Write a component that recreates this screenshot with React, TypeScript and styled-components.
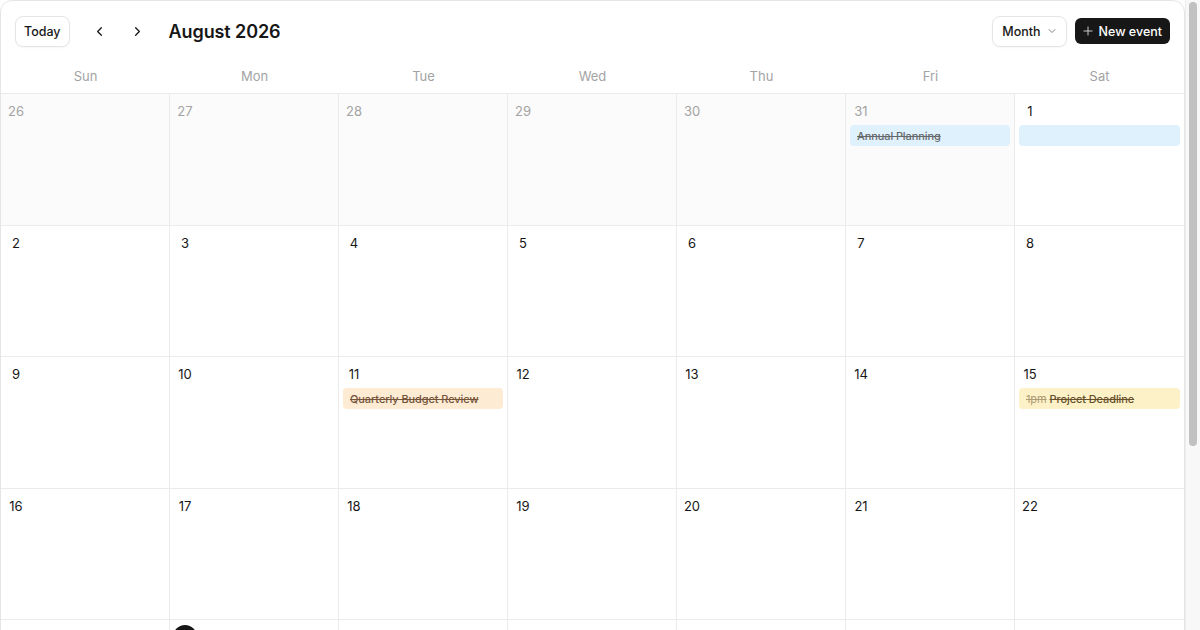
import React from "react";
import styled, { createGlobalStyle } from "styled-components";
import { ChevronLeft, ChevronRight, ChevronDown, Plus } from "lucide-react";

const Global = createGlobalStyle`
  html, body { margin: 0; padding: 0; background: #ffffff; overflow: hidden; }
  body { font-family: Inter, "Noto Sans", "Liberation Sans", sans-serif; color: #171717; -webkit-font-smoothing: antialiased; }
  * { box-sizing: border-box; }
`;

const Page = styled.div`
  height: 100vh;
  overflow: hidden;
  padding-right: 15px;
`;

const ScrollTrack = styled.div`
  position: fixed;
  top: 0;
  right: 0;
  width: 15px;
  height: 100vh;
  background: #f8f8f8;
  border-left: 1px solid #ededed;
`;

const ScrollThumb = styled.div`
  position: absolute;
  top: 2px;
  left: 3px;
  width: 8px;
  border-radius: 4px;
  background: #c1c1c1;
`;

const Inner = styled.div`
  padding-bottom: 10px;
`;

const Card = styled.div`
  border: 1px solid #e5e5e5;
  border-radius: 12px;
  overflow: hidden;
  background: #fff;
`;

const Header = styled.header`
  height: 60px;
  display: flex;
  align-items: center;
  justify-content: space-between;
  padding: 0 14px 0 14px;
`;

const Group = styled.div<{ $gap: number }>`
  display: flex;
  align-items: center;
  gap: ${(p) => p.$gap}px;
`;

const OutlineButton = styled.button<{ $pl: number; $pr: number }>`
  height: 31px;
  display: inline-flex;
  align-items: center;
  gap: 5px;
  padding: 0 ${(p) => p.$pr}px 0 ${(p) => p.$pl}px;
  border: 1px solid #e5e5e5;
  border-radius: 8px;
  background: #fff;
  box-shadow: 0 1px 2px rgba(0, 0, 0, 0.04);
  font-family: inherit;
  font-size: 12.5px;
  font-weight: 500;
  color: #171717;
  cursor: pointer;
  svg { color: #737373; }
`;

const IconButton = styled.button`
  width: 32px;
  height: 32px;
  display: inline-flex;
  align-items: center;
  justify-content: center;
  border: none;
  background: transparent;
  border-radius: 8px;
  color: #171717;
  padding: 0;
  cursor: pointer;
`;

const Title = styled.h1`
  margin: 0 0 0 1px;
  font-size: 18px;
  font-weight: 600;
  letter-spacing: -0.1px;
  color: #171717;
`;

const PrimaryButton = styled.button`
  height: 26px;
  display: inline-flex;
  align-items: center;
  gap: 4px;
  padding: 0 8px 0 6px;
  border: none;
  border-radius: 6px;
  background: #171717;
  color: #fff;
  font-family: inherit;
  font-size: 12.5px;
  font-weight: 500;
  cursor: pointer;
  svg { color: #d4d4d4; }
`;

const WeekHeader = styled.div`
  display: grid;
  grid-template-columns: repeat(7, 1fr);
  height: 33px;
  border-bottom: 1px solid #ebebeb;
`;

const WeekDay = styled.div`
  display: flex;
  align-items: center;
  justify-content: center;
  font-size: 13px;
  color: #a3a3a3;
  padding-bottom: 2px;
`;

const Grid = styled.div`
  display: grid;
  grid-template-columns: repeat(7, 1fr);
  grid-auto-rows: 131.5px;
`;

const Cell = styled.div<{ $muted: boolean; $last: boolean }>`
  background: ${(p) => (p.$muted ? "#fbfbfb" : "#ffffff")};
  border-right: ${(p) => (p.$last ? "none" : "1px solid #ebebeb")};
  border-bottom: 1px solid #ebebeb;
  padding: 5px 0 0 0;
  display: flex;
  flex-direction: column;
  gap: 2px;
  min-width: 0;
`;

const DayNum = styled.span<{ $muted: boolean; $today: boolean }>`
  width: 24px;
  height: 24px;
  margin-left: 3px;
  display: flex;
  align-items: center;
  justify-content: center;
  border-radius: 50%;
  font-size: 13px;
  color: ${(p) => (p.$today ? "#fff" : p.$muted ? "#a3a3a3" : "#171717")};
  background: ${(p) => (p.$today ? "#171717" : "transparent")};
  font-weight: ${(p) => (p.$today ? 600 : 400)};
`;

const tones = {
  blue: { bg: "#dff1fd", fg: "#525252" },
  orange: { bg: "#fdebd3", fg: "#5c3a1e" },
  yellow: { bg: "#fdf1c7", fg: "#4a3410" },
};

type Tone = keyof typeof tones;

const Chip = styled.div<{ $tone: Tone }>`
  height: 21px;
  margin: 0 4px;
  padding: 0 7px;
  border-radius: 4px;
  background: ${(p) => tones[p.$tone].bg};
  color: ${(p) => tones[p.$tone].fg};
  font-size: 11px;
  font-weight: 500;
  letter-spacing: -0.1px;
  display: flex;
  align-items: center;
  gap: 3px;
  white-space: nowrap;
  overflow: hidden;
  text-decoration: line-through;
`;

const ChipTime = styled.span`
  opacity: 0.45;
  font-weight: 400;
`;

const ChipText = styled.span`
  opacity: 0.85;
`;

type Ev = { title?: string; time?: string; tone: Tone };

const events: Record<string, Ev[]> = {
  "7-31": [{ title: "Annual Planning", tone: "blue" }],
  "8-1": [{ tone: "blue" }],
  "8-11": [{ title: "Quarterly Budget Review", tone: "orange" }],
  "8-15": [{ title: "Project Deadline", time: "1pm", tone: "yellow" }],
};

const weekdays = ["Sun", "Mon", "Tue", "Wed", "Thu", "Fri", "Sat"];

function buildDays() {
  const days: { d: number; m: number }[] = [];
  for (let d = 26; d <= 31; d++) days.push({ d, m: 7 });
  for (let d = 1; d <= 31; d++) days.push({ d, m: 8 });
  for (let d = 1; d <= 5; d++) days.push({ d, m: 9 });
  return days;
}

export default function App() {
  const days = buildDays();
  return (
    <Page>
      <Global />
      <Inner>
        <Card>
          <Header>
            <Group $gap={14}>
              <OutlineButton $pl={8} $pr={8}>Today</OutlineButton>
              <Group $gap={6}>
                <IconButton aria-label="Previous">
                  <ChevronLeft size={15} strokeWidth={2} />
                </IconButton>
                <IconButton aria-label="Next">
                  <ChevronRight size={15} strokeWidth={2} />
                </IconButton>
              </Group>
              <Title>August 2026</Title>
            </Group>
            <Group $gap={8}>
              <OutlineButton $pl={9} $pr={8}>
                Month
                <ChevronDown size={12} strokeWidth={1.8} />
              </OutlineButton>
              <PrimaryButton>
                <Plus size={14} strokeWidth={1.6} />
                New event
              </PrimaryButton>
            </Group>
          </Header>
          <WeekHeader>
            {weekdays.map((w) => (
              <WeekDay key={w}>{w}</WeekDay>
            ))}
          </WeekHeader>
          <Grid>
            {days.map((day, i) => {
              const muted = day.m !== 8;
              const today = day.m === 8 && day.d === 24;
              const evs = events[`${day.m}-${day.d}`] || [];
              return (
                <Cell key={i} $muted={muted} $last={i % 7 === 6}>
                  <DayNum $muted={muted} $today={today}>
                    {day.d}
                  </DayNum>
                  {evs.map((e, j) => (
                    <Chip key={j} $tone={e.tone}>
                      {e.time && <ChipTime>{e.time}</ChipTime>}
                      {e.title && <ChipText>{e.title}</ChipText>}
                    </Chip>
                  ))}
                </Cell>
              );
            })}
          </Grid>
        </Card>
      </Inner>
      <ScrollTrack aria-hidden>
        <ScrollThumb style={{ height: 444 }} />
      </ScrollTrack>
    </Page>
  );
}
